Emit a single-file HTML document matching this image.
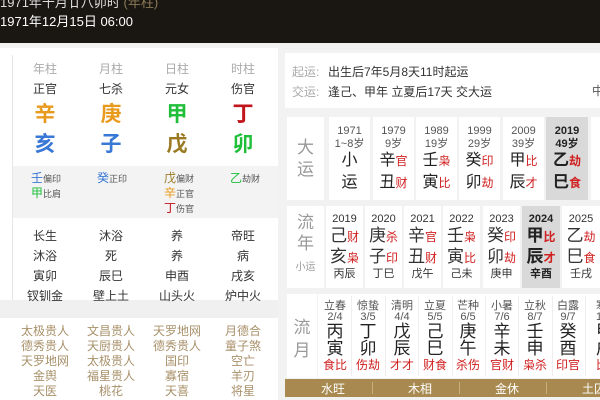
<!DOCTYPE html>
<html><head><meta charset="utf-8"><style>
*{margin:0;padding:0;box-sizing:border-box}
body{width:600px;height:400px;overflow:hidden;background:#f2f2f2;font-family:"Liberation Sans","Noto Sans CJK SC",sans-serif;position:relative;color:#333}
.a{position:absolute;white-space:nowrap}
.c{position:absolute;transform:translateX(-50%);text-align:center;white-space:nowrap}
.or{color:#e89a1c}.gr{color:#1fbf3a}.rd{color:#c2151b}.bl{color:#3a78d6}.br{color:#9a7a22}
.sh{color:#a8916a;font-size:12px;line-height:15px}
.cell{position:absolute;background:#fff;text-align:center;line-height:1.15}
.r{color:#d02020}
</style></head><body>
<div class="a" style="left:0;top:0;width:600px;height:43px;background:#1a1612"></div>
<div class="a" style="left:0;top:-8px;color:#ddd;font-size:13px">1971年十月廿八卯时 <span style="color:#8a7a55">(年柱)</span></div>
<div class="a" style="left:0;top:11px;color:#fff;font-size:13px">1971年12月15日 06:00</div>

<div class="a" style="left:0;top:48px;width:278px;height:352px;background:#fff"></div>
<div class="a" style="left:12px;top:55px;width:1px;height:245px;background:#e6e6e6"></div>
<div class="a" style="left:13px;top:166px;width:265px;height:52px;background:#f3f3f3"></div>
<div class="a" style="left:0;top:300px;width:278px;height:18px;background:#f0f0f0"></div>

<div class="c" style="left:45px;top:60px;font-size:12px;color:#aaa">年柱</div>
<div class="c" style="left:111px;top:60px;font-size:12px;color:#aaa">月柱</div>
<div class="c" style="left:177px;top:60px;font-size:12px;color:#aaa">日柱</div>
<div class="c" style="left:243px;top:60px;font-size:12px;color:#aaa">时柱</div>
<div class="c" style="left:45px;top:80px;font-size:12px">正官</div>
<div class="c" style="left:111px;top:80px;font-size:12px">七杀</div>
<div class="c" style="left:177px;top:80px;font-size:12px">元女</div>
<div class="c" style="left:243px;top:80px;font-size:12px">伤官</div>
<div class="c or" style="left:45px;top:98px;font-size:21px;font-weight:bold">辛</div>
<div class="c or" style="left:111px;top:98px;font-size:21px;font-weight:bold">庚</div>
<div class="c gr" style="left:177px;top:98px;font-size:21px;font-weight:bold">甲</div>
<div class="c rd" style="left:243px;top:98px;font-size:21px;font-weight:bold">丁</div>
<div class="c bl" style="left:45px;top:128px;font-size:21px;font-weight:bold">亥</div>
<div class="c bl" style="left:111px;top:128px;font-size:21px;font-weight:bold">子</div>
<div class="c br" style="left:177px;top:128px;font-size:21px;font-weight:bold">戊</div>
<div class="c gr" style="left:243px;top:128px;font-size:21px;font-weight:bold">卯</div>

<div class="a" style="left:31px;top:171px;font-size:12px;line-height:14px;color:#555"><span class="bl">壬</span><span style="font-size:9px">偏印</span><br><span class="gr">甲</span><span style="font-size:9px">比肩</span></div>
<div class="a" style="left:97px;top:171px;font-size:12px;line-height:14px;color:#555"><span class="bl">癸</span><span style="font-size:9px">正印</span></div>
<div class="a" style="left:164px;top:171px;font-size:12px;line-height:14px;color:#555"><span class="br">戊</span><span style="font-size:9px">偏财</span><br><span class="or">辛</span><span style="font-size:9px">正官</span><br><span class="rd">丁</span><span style="font-size:9px">伤官</span></div>
<div class="a" style="left:230px;top:171px;font-size:12px;line-height:14px;color:#555"><span class="gr">乙</span><span style="font-size:9px">劫财</span></div>

<div class="c" style="left:45px;top:226px;font-size:12px;line-height:20px">长生<br>沐浴<br>寅卯<br>钗钏金</div>
<div class="c" style="left:111px;top:226px;font-size:12px;line-height:20px">沐浴<br>死<br>辰巳<br>壁上土</div>
<div class="c" style="left:177px;top:226px;font-size:12px;line-height:20px">养<br>养<br>申酉<br>山头火</div>
<div class="c" style="left:243px;top:226px;font-size:12px;line-height:20px">帝旺<br>病<br>戌亥<br>炉中火</div>

<div class="c sh" style="left:45px;top:324px">太极贵人<br>德秀贵人<br>天罗地网<br>金舆<br>天医</div>
<div class="c sh" style="left:111px;top:324px">文昌贵人<br>天厨贵人<br>太极贵人<br>福星贵人<br>桃花</div>
<div class="c sh" style="left:177px;top:324px">天罗地网<br>德秀贵人<br>国印<br>寡宿<br>天喜</div>
<div class="c sh" style="left:243px;top:324px">月德合<br>童子煞<br>空亡<br>羊刃<br>将星</div>

<div class="a" style="left:285px;top:53px;width:315px;height:55px;background:#fff"></div>
<div class="a" style="left:292px;top:62px;font-size:12px;line-height:20px;color:#aaa">起运:<br>交运:</div>
<div class="a" style="left:328px;top:62px;font-size:12px;line-height:20px;color:#333">出生后7年5月8天11时起运<br>逢己、甲年 立夏后17天 交大运</div>
<div class="a" style="left:592px;top:82px;font-size:12px;color:#555">中</div>

<div class="cell" style="left:287px;top:117px;width:37px;height:83px;color:#999;font-size:17px;padding-top:20px;line-height:22px">大<br>运</div>
<div class="cell" style="left:329px;top:117px;width:41px;height:83px;padding-top:8px;font-size:11px;color:#555">1971<br>1~8岁<br><span style="font-size:16px;color:#222;line-height:22px">小<br>运</span></div>
<div class="cell" style="left:373px;top:117px;width:41px;height:83px;padding-top:8px;font-size:11px;color:#555">1979<br>9岁<br><span style="font-size:16px;color:#222;line-height:22px">辛<span class="r" style="font-size:12px">官</span><br>丑<span class="r" style="font-size:12px">财</span></span></div>
<div class="cell" style="left:416px;top:117px;width:41px;height:83px;padding-top:8px;font-size:11px;color:#555">1989<br>19岁<br><span style="font-size:16px;color:#222;line-height:22px">壬<span class="r" style="font-size:12px">枭</span><br>寅<span class="r" style="font-size:12px">比</span></span></div>
<div class="cell" style="left:459px;top:117px;width:41px;height:83px;padding-top:8px;font-size:11px;color:#555">1999<br>29岁<br><span style="font-size:16px;color:#222;line-height:22px">癸<span class="r" style="font-size:12px">印</span><br>卯<span class="r" style="font-size:12px">劫</span></span></div>
<div class="cell" style="left:503px;top:117px;width:41px;height:83px;padding-top:8px;font-size:11px;color:#555">2009<br>39岁<br><span style="font-size:16px;color:#222;line-height:22px">甲<span class="r" style="font-size:12px">比</span><br>辰<span class="r" style="font-size:12px">才</span></span></div>
<div class="cell" style="left:546px;top:117px;width:42px;height:83px;padding-top:8px;font-size:11px;color:#222;font-weight:bold;background:#d9d9d9">2019<br>49岁<br><span style="font-size:16px;line-height:22px">乙<span class="r" style="font-size:12px">劫</span><br>巳<span class="r" style="font-size:12px">食</span></span></div>
<div class="cell" style="left:591px;top:117px;width:20px;height:83px"></div>

<div class="cell" style="left:287px;top:206px;width:37px;height:82px;color:#999;font-size:17px;padding-top:6px;line-height:21px">流<br>年<br><span style="font-size:10px">小运</span></div>
<div class="cell" style="left:326px;top:206px;width:37px;height:82px;padding-top:7px;font-size:11px;color:#333">2019<br><span style="font-size:17px;line-height:20px">己<span class="r" style="font-size:12px">财</span><br>亥<span class="r" style="font-size:12px">枭</span></span><br>丙辰</div>
<div class="cell" style="left:365px;top:206px;width:37px;height:82px;padding-top:7px;font-size:11px;color:#333">2020<br><span style="font-size:17px;line-height:20px">庚<span class="r" style="font-size:12px">杀</span><br>子<span class="r" style="font-size:12px">印</span></span><br>丁巳</div>
<div class="cell" style="left:404px;top:206px;width:37px;height:82px;padding-top:7px;font-size:11px;color:#333">2021<br><span style="font-size:17px;line-height:20px">辛<span class="r" style="font-size:12px">官</span><br>丑<span class="r" style="font-size:12px">财</span></span><br>戊午</div>
<div class="cell" style="left:443px;top:206px;width:37px;height:82px;padding-top:7px;font-size:11px;color:#333">2022<br><span style="font-size:17px;line-height:20px">壬<span class="r" style="font-size:12px">枭</span><br>寅<span class="r" style="font-size:12px">比</span></span><br>己未</div>
<div class="cell" style="left:483px;top:206px;width:37px;height:82px;padding-top:7px;font-size:11px;color:#333">2023<br><span style="font-size:17px;line-height:20px">癸<span class="r" style="font-size:12px">印</span><br>卯<span class="r" style="font-size:12px">劫</span></span><br>庚申</div>
<div class="cell" style="left:522px;top:206px;width:38px;height:82px;padding-top:7px;font-size:11px;color:#222;font-weight:bold;background:#d9d9d9">2024<br><span style="font-size:17px;line-height:20px">甲<span class="r" style="font-size:12px">比</span><br>辰<span class="r" style="font-size:12px">才</span></span><br>辛酉</div>
<div class="cell" style="left:562px;top:206px;width:38px;height:82px;padding-top:7px;font-size:11px;color:#333">2025<br><span style="font-size:17px;line-height:20px">乙<span class="r" style="font-size:12px">劫</span><br>巳<span class="r" style="font-size:12px">食</span></span><br>壬戌</div>

<div class="cell" style="left:287px;top:294px;width:30px;height:84px;color:#999;font-size:17px;padding-top:22px;line-height:23px">流<br>月</div>
<div class="a" style="left:318px;top:294px;width:282px;height:84px;background:#fff"></div>
<div class="c" style="left:335px;top:301px;font-size:11px;line-height:11px;color:#555">立春<br>2/4<br><span style="font-size:17px;line-height:17px;color:#222">丙<br>寅</span><br><span class="r" style="font-size:12px;line-height:16px">食比</span></div>
<div class="c" style="left:368px;top:301px;font-size:11px;line-height:11px;color:#555">惊蛰<br>3/5<br><span style="font-size:17px;line-height:17px;color:#222">丁<br>卯</span><br><span class="r" style="font-size:12px;line-height:16px">伤劫</span></div>
<div class="c" style="left:402px;top:301px;font-size:11px;line-height:11px;color:#555">清明<br>4/4<br><span style="font-size:17px;line-height:17px;color:#222">戊<br>辰</span><br><span class="r" style="font-size:12px;line-height:16px">才才</span></div>
<div class="c" style="left:435px;top:301px;font-size:11px;line-height:11px;color:#555">立夏<br>5/5<br><span style="font-size:17px;line-height:17px;color:#222">己<br>巳</span><br><span class="r" style="font-size:12px;line-height:16px">财食</span></div>
<div class="c" style="left:468px;top:301px;font-size:11px;line-height:11px;color:#555">芒种<br>6/5<br><span style="font-size:17px;line-height:17px;color:#222">庚<br>午</span><br><span class="r" style="font-size:12px;line-height:16px">杀伤</span></div>
<div class="c" style="left:502px;top:301px;font-size:11px;line-height:11px;color:#555">小暑<br>7/6<br><span style="font-size:17px;line-height:17px;color:#222">辛<br>未</span><br><span class="r" style="font-size:12px;line-height:16px">官财</span></div>
<div class="c" style="left:535px;top:301px;font-size:11px;line-height:11px;color:#555">立秋<br>8/7<br><span style="font-size:17px;line-height:17px;color:#222">壬<br>申</span><br><span class="r" style="font-size:12px;line-height:16px">枭杀</span></div>
<div class="c" style="left:568px;top:301px;font-size:11px;line-height:11px;color:#555">白露<br>9/7<br><span style="font-size:17px;line-height:17px;color:#222">癸<br>酉</span><br><span class="r" style="font-size:12px;line-height:16px">印官</span></div>
<div class="a" style="left:596px;top:301px;font-size:11px;line-height:11px;color:#555">寒<br>10<br><span style="font-size:17px;line-height:17px;color:#222">甲<br>戌</span><br><span class="r" style="font-size:12px;line-height:16px">比</span></div>
<div class="a" style="left:351px;top:296px;width:1px;height:80px;background:#eee"></div>
<div class="a" style="left:385px;top:296px;width:1px;height:80px;background:#eee"></div>
<div class="a" style="left:418px;top:296px;width:1px;height:80px;background:#eee"></div>
<div class="a" style="left:452px;top:296px;width:1px;height:80px;background:#eee"></div>
<div class="a" style="left:485px;top:296px;width:1px;height:80px;background:#eee"></div>
<div class="a" style="left:518px;top:296px;width:1px;height:80px;background:#eee"></div>
<div class="a" style="left:552px;top:296px;width:1px;height:80px;background:#eee"></div>
<div class="a" style="left:585px;top:296px;width:1px;height:80px;background:#eee"></div>

<div class="a" style="left:285px;top:379px;width:315px;height:18px;background:#a8894f"></div>
<div class="c" style="left:333px;top:380px;font-size:12px;color:#fff">水旺</div>
<div class="c" style="left:420px;top:380px;font-size:12px;color:#fff">木相</div>
<div class="c" style="left:507px;top:380px;font-size:12px;color:#fff">金休</div>
<div class="c" style="left:594px;top:380px;font-size:12px;color:#fff">土囚</div>
<div class="a" style="left:372px;top:382px;width:1px;height:12px;background:#c9b07e"></div>
<div class="a" style="left:459px;top:382px;width:1px;height:12px;background:#c9b07e"></div>
<div class="a" style="left:546px;top:382px;width:1px;height:12px;background:#c9b07e"></div>
</body></html>
